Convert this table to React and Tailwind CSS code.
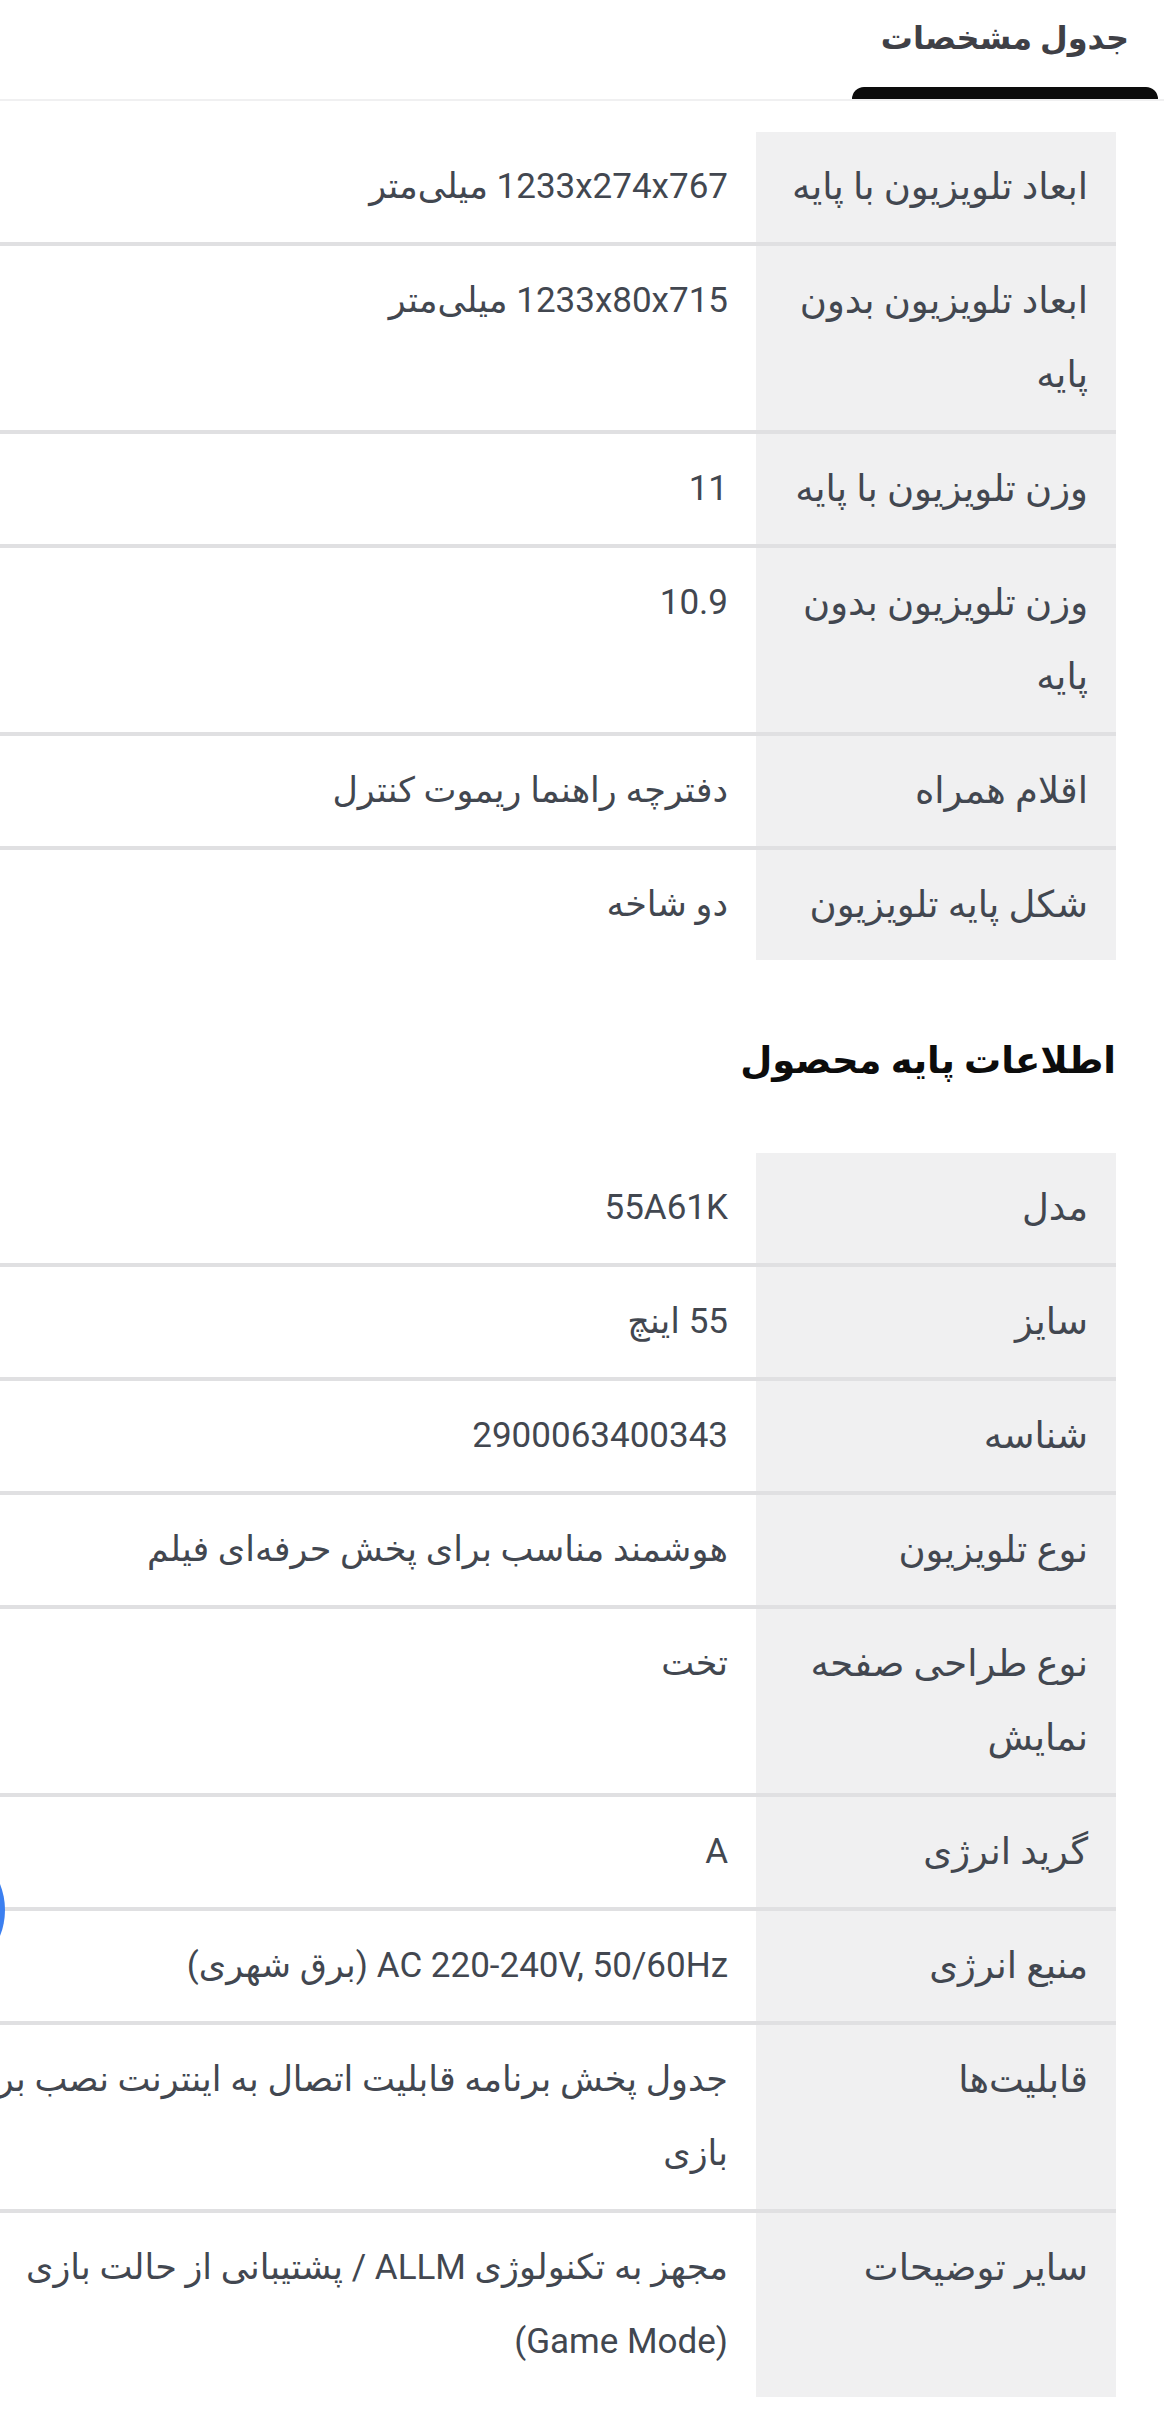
const dims = [
  { label: "ابعاد تلویزیون با پایه", value: "1233x274x767 میلی‌متر" },
  { label: "ابعاد تلویزیون بدون پایه", value: "1233x80x715 میلی‌متر" },
  { label: "وزن تلویزیون با پایه", value: "11" },
  { label: "وزن تلویزیون بدون پایه", value: "10.9" },
  { label: "اقلام همراه", value: "دفترچه راهنما ریموت کنترل" },
  { label: "شکل پایه تلویزیون", value: "دو شاخه" },
];

const basics = [
  { label: "مدل", value: "55A61K" },
  { label: "سایز", value: "55 اینچ" },
  { label: "شناسه", value: "2900063400343" },
  { label: "نوع تلویزیون", value: "هوشمند مناسب برای پخش حرفه‌ای فیلم" },
  { label: "نوع طراحی صفحه نمایش", value: "تخت" },
  { label: "گرید انرژی", value: "A" },
  { label: "منبع انرژی", value: "AC 220-240V, 50/60Hz (برق شهری)" },
  { label: "قابلیت‌ها", value: "جدول پخش برنامه قابلیت اتصال به اینترنت نصب برنامه بازی" },
  { label: "سایر توضیحات", value: "مجهز به تکنولوژی ALLM / پشتیبانی از حالت بازی (Game\u00a0Mode)" },
];

function SpecTable({ rows }) {
  return (
    <div className="mr-[48px] flex flex-col">
      {rows.map((r, i) => (
        <div
          key={i}
          className={
            "flex shrink-0 " +
            (i < rows.length - 1 ? "border-b-4 border-[#e0e0e2]" : "")
          }
        >
          <div className="w-[360px] shrink-0 bg-[#f0f0f1] px-[28px] py-[18px] text-[37px] leading-[74px]">
            {r.label}
          </div>
          <div className="w-[886px] shrink-0 px-[28px] py-[18px] leading-[74px]">
            {r.value}
          </div>
        </div>
      ))}
    </div>
  );
}

export default function App() {
  return (
    <div
      dir="rtl"
      className="relative w-[1164px] min-h-[2430px] overflow-hidden bg-white text-[35px] text-[#424750]"
      style={{ fontFamily: 'Roboto, "DejaVu Sans", sans-serif' }}
    >
      <div className="border-b-2 border-[#f0f0f1]">
        <div className="mr-[6px] flex w-[306px] flex-col items-center">
          <div className="pt-[14px] text-[32px] font-bold leading-[48px] text-[#3f4046]">
            جدول مشخصات
          </div>
          <div className="mt-[25px] h-[12px] w-full rounded-t-[12px] bg-[#0c0c0c]" />
        </div>
      </div>

      <div className="pt-[31px]">
        <SpecTable rows={dims} />
      </div>

      <h2 className="mr-[48px] mt-[77px] text-[37px] font-bold leading-[48px] text-[#0c0c0c]">
        اطلاعات پایه محصول
      </h2>

      <div className="pt-[68px]">
        <SpecTable rows={basics} />
      </div>

      <div className="absolute left-[-135px] top-[1840px] h-[140px] w-[140px] rounded-full bg-[#3b7ff0]" />
    </div>
  );
}
